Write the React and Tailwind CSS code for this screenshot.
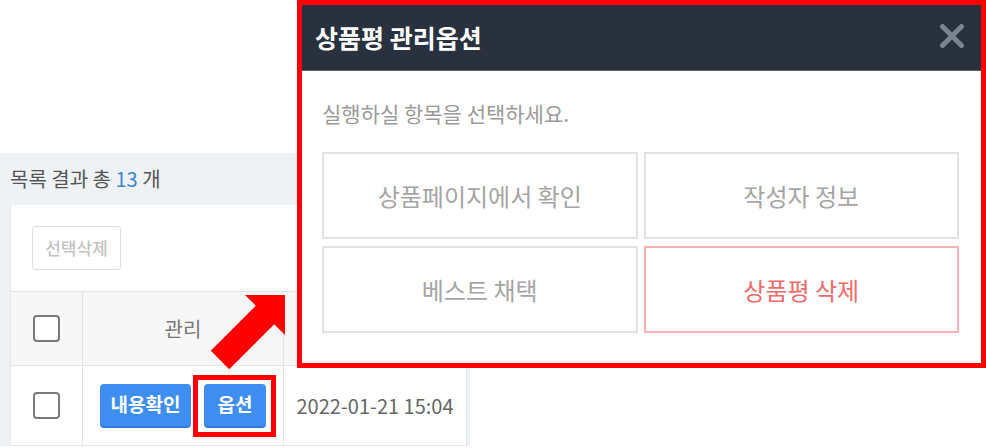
import { useState } from 'react';

const FONT = { fontFamily: '"Noto Sans CJK KR", "Noto Sans", sans-serif' };

function Checkbox() {
  return <span className="block w-[27px] h-[27px] rounded-[4px] border-2 border-[#7a7a7a] bg-white" />;
}

function ReviewList() {
  return (
    <div className="w-[470px] bg-[#eef2f5]">
      {/* 목록 헤더 */}
      <div className="h-[52px] flex items-center pl-[10px] text-[20px] text-[#555]">
        목록 결과 총&nbsp;<span className="text-[#3f86cf]">13</span>&nbsp;개
      </div>

      <div className="ml-[10px] mr-[3px] bg-white border-l border-r border-[#e3e6ea]">
        <div className="h-[86px] pl-[21px] pt-[21px]">
          <button className="w-[89px] h-[44px] border border-[#dedede] rounded-[3px] bg-white text-[17px] font-medium text-[#c3c3c3]">
            선택삭제
          </button>
        </div>

        {/* 테이블 */}
        <div className="grid grid-cols-[72px_201px_1fr] border-t border-[#e4e4e4]">
          <div className="h-[74px] bg-[#f7f7f7] border-r border-b border-[#e4e4e4] flex items-center justify-center">
            <Checkbox />
          </div>
          <div className="h-[74px] bg-[#f7f7f7] border-r border-b border-[#e4e4e4] flex items-center justify-center text-[20px] text-[#777]">
            관리
          </div>
          <div className="h-[74px] bg-[#f7f7f7] border-b border-[#e4e4e4]" />

          <div className="h-[80px] border-r border-b border-[#e4e4e4] flex items-center justify-center">
            <Checkbox />
          </div>
          <div className="h-[80px] border-r border-b border-[#e4e4e4] flex items-center justify-center gap-[13px]">
            <button className="w-[91px] h-[44px] rounded-[4px] bg-[#3d8ef0] border-b-2 border-[#2f7bd8] text-white text-[19px] font-bold">
              내용확인
            </button>
            <button className="w-[62px] h-[44px] rounded-[4px] bg-[#3d8ef0] border-b-2 border-[#2f7bd8] text-white text-[19px] font-bold">
              옵션
            </button>
          </div>
          <div className="h-[80px] border-b border-[#e4e4e4] flex items-center justify-center text-[20px] text-[#666]">
            2022-01-21 15:04
          </div>
        </div>
      </div>
    </div>
  );
}

function OptionModal() {
  const options = [
    { label: '상품페이지에서 확인' },
    { label: '작성자 정보' },
    { label: '베스트 채택' },
    { label: '상품평 삭제', danger: true },
  ];

  return (
    <div className="absolute left-[297px] top-0 w-[689px] h-[368px] border-[5px] border-[#ff0000] bg-white">
      <div className="h-[66px] bg-[#29313e] border-b border-[#59616d] flex items-center justify-between pl-[13px] pr-[16px]">
        <span className="text-[25px] font-bold text-white">상품평 관리옵션</span>
        <svg width="26" height="26" viewBox="0 0 26 26" className="mt-[-4px]">
          <path d="M3.5 3.5 L22.5 22.5 M22.5 3.5 L3.5 22.5" stroke="#7b838f" strokeWidth="5" strokeLinecap="round" />
        </svg>
      </div>

      <div className="pl-[20px] pr-[22px]">
        <p className="pt-[28px] text-[21px] text-[#9a9a9a] leading-[28px]">실행하실 항목을 선택하세요.</p>
        <div className="mt-[25px] grid grid-cols-2 gap-x-[6px] gap-y-[7px]">
          {options.map((o) => (
            <button
              key={o.label}
              className={
                o.danger
                  ? 'h-[87px] border-2 border-[#f6b3b3] bg-white text-[24px] text-[#ee6b6b]'
                  : 'h-[87px] border-2 border-[#dfe2e6] bg-white text-[24px] text-[#a5a5a5]'
              }
            >
              {o.label}
            </button>
          ))}
        </div>
      </div>
    </div>
  );
}

export default function App() {
  const [open] = useState(true);

  return (
    <div className="relative w-[986px] h-[448px] bg-white overflow-hidden" style={FONT}>
      <div className="pt-[153px]">
        <ReviewList />
      </div>

      {/* 옵션 버튼 강조 */}
      <div className="absolute left-[193px] top-[375px] w-[83px] h-[62px] border-[5px] border-[#ff0000]" />

      {/* 화살표 */}
      <svg className="absolute left-0 top-0" width="986" height="448" viewBox="0 0 986 448">
        <polygon
          points="285,295 245,295 255.8,305.8 210.8,350.8 229.2,369.2 274.2,324.2 285,335"
          fill="#ff0000"
        />
      </svg>

      {open && <OptionModal />}
    </div>
  );
}
